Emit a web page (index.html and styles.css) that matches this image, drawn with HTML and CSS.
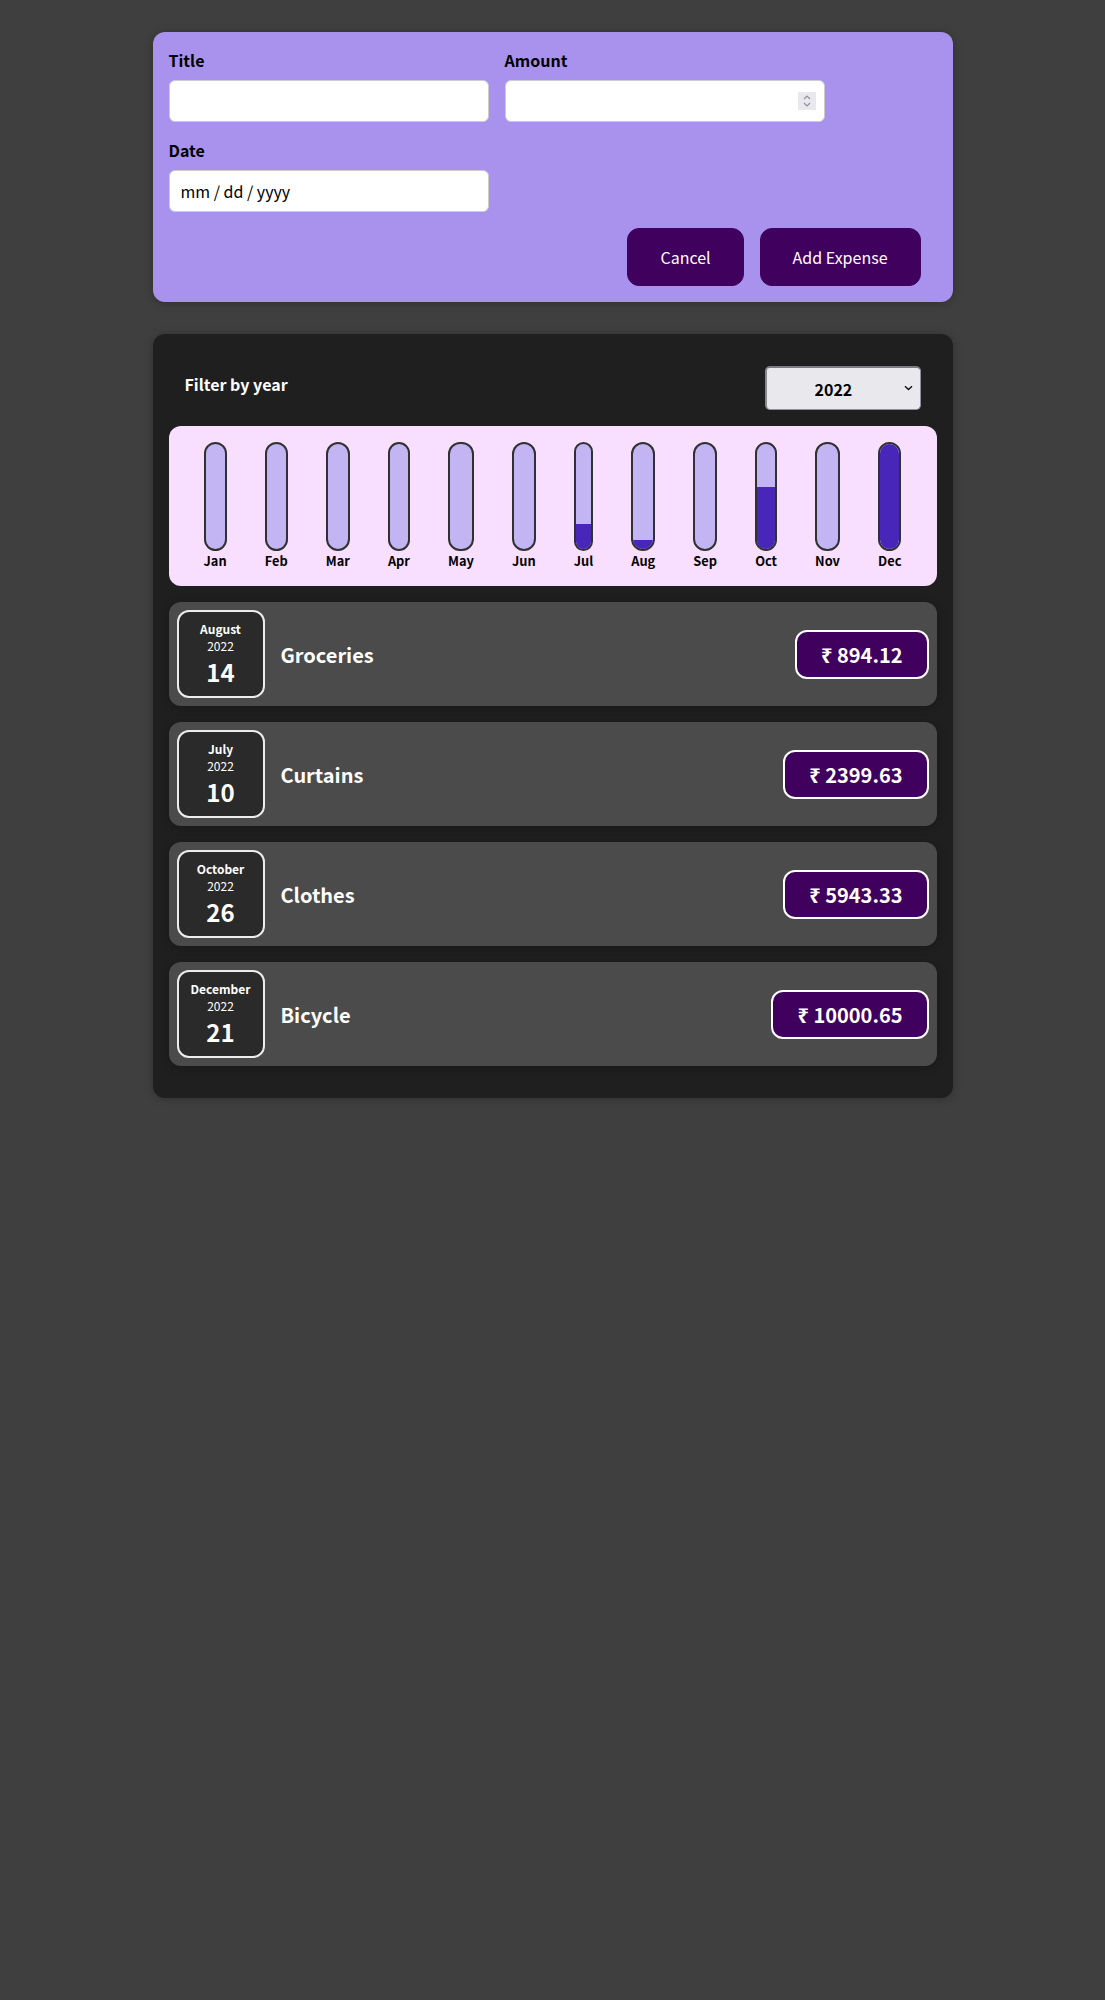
FILE: index.html
```html
<!DOCTYPE html>
<html lang="en">
<head>
<meta charset="utf-8">
<title>Expense Tracker</title>
<link rel="stylesheet" href="styles.css">
</head>
<body>
<div class="app">
  <div class="new-expense">
    <form class="expense-form">
      <div class="new-expense__controls">
        <div class="new-expense__control">
          <label>Title</label>
          <input type="text">
        </div>
        <div class="new-expense__control">
          <label>Amount</label>
          <span class="number-wrap">
            <input type="text" class="number-input">
            <span class="spinner">
              <svg width="10" height="14" viewBox="0 0 10 14"><path d="M2 5 L5 2 L8 5" fill="none" stroke="#8e8e9c" stroke-width="1.2"/><path d="M2 9 L5 12 L8 9" fill="none" stroke="#8e8e9c" stroke-width="1.2"/></svg>
            </span>
          </span>
        </div>
        <div class="new-expense__control">
          <label>Date</label>
          <input type="text" class="date-input" placeholder="mm / dd / yyyy">
        </div>
      </div>
      <div class="new-expense__actions">
        <button type="button" class="btn">Cancel</button>
        <button type="button" class="btn">Add Expense</button>
      </div>
    </form>
  </div>

  <div class="card expenses">
    <div class="expenses-filter">
      <div class="expenses-filter__control">
        <label>Filter by year</label>
        <span class="select-wrap">
          <select class="year-select">
            <option>2022</option>
            <option>2021</option>
            <option>2020</option>
            <option>2019</option>
          </select>
          <svg class="select-arrow" width="9" height="6" viewBox="0 0 9 6"><path d="M1 1.2 L4.5 4.6 L8 1.2" fill="none" stroke="#111" stroke-width="1.4"/></svg>
        </span>
      </div>
    </div>

    <div class="chart">
      <div class="chart-bar"><div class="chart-bar__inner"><div class="chart-bar__fill" style="height:0%"></div></div><div class="chart-bar__label">Jan</div></div>
      <div class="chart-bar"><div class="chart-bar__inner"><div class="chart-bar__fill" style="height:0%"></div></div><div class="chart-bar__label">Feb</div></div>
      <div class="chart-bar"><div class="chart-bar__inner"><div class="chart-bar__fill" style="height:0%"></div></div><div class="chart-bar__label">Mar</div></div>
      <div class="chart-bar"><div class="chart-bar__inner"><div class="chart-bar__fill" style="height:0%"></div></div><div class="chart-bar__label">Apr</div></div>
      <div class="chart-bar"><div class="chart-bar__inner"><div class="chart-bar__fill" style="height:0%"></div></div><div class="chart-bar__label">May</div></div>
      <div class="chart-bar"><div class="chart-bar__inner"><div class="chart-bar__fill" style="height:0%"></div></div><div class="chart-bar__label">Jun</div></div>
      <div class="chart-bar"><div class="chart-bar__inner"><div class="chart-bar__fill" style="height:24%"></div></div><div class="chart-bar__label">Jul</div></div>
      <div class="chart-bar"><div class="chart-bar__inner"><div class="chart-bar__fill" style="height:9%"></div></div><div class="chart-bar__label">Aug</div></div>
      <div class="chart-bar"><div class="chart-bar__inner"><div class="chart-bar__fill" style="height:0%"></div></div><div class="chart-bar__label">Sep</div></div>
      <div class="chart-bar"><div class="chart-bar__inner"><div class="chart-bar__fill" style="height:59%"></div></div><div class="chart-bar__label">Oct</div></div>
      <div class="chart-bar"><div class="chart-bar__inner"><div class="chart-bar__fill" style="height:0%"></div></div><div class="chart-bar__label">Nov</div></div>
      <div class="chart-bar"><div class="chart-bar__inner"><div class="chart-bar__fill" style="height:100%"></div></div><div class="chart-bar__label">Dec</div></div>
    </div>

    <div class="expenses-list">
      <div class="card expense-item">
        <div class="expense-date">
          <div class="expense-date__month">August</div>
          <div class="expense-date__year">2022</div>
          <div class="expense-date__day">14</div>
        </div>
        <div class="expense-item__description">
          <h2>Groceries</h2>
          <div class="expense-item__price">₹ 894.12</div>
        </div>
      </div>
      <div class="card expense-item">
        <div class="expense-date">
          <div class="expense-date__month">July</div>
          <div class="expense-date__year">2022</div>
          <div class="expense-date__day">10</div>
        </div>
        <div class="expense-item__description">
          <h2>Curtains</h2>
          <div class="expense-item__price">₹ 2399.63</div>
        </div>
      </div>
      <div class="card expense-item">
        <div class="expense-date">
          <div class="expense-date__month">October</div>
          <div class="expense-date__year">2022</div>
          <div class="expense-date__day">26</div>
        </div>
        <div class="expense-item__description">
          <h2>Clothes</h2>
          <div class="expense-item__price">₹ 5943.33</div>
        </div>
      </div>
      <div class="card expense-item">
        <div class="expense-date">
          <div class="expense-date__month">December</div>
          <div class="expense-date__year">2022</div>
          <div class="expense-date__day">21</div>
        </div>
        <div class="expense-item__description">
          <h2>Bicycle</h2>
          <div class="expense-item__price">₹ 10000.65</div>
        </div>
      </div>
    </div>
  </div>
</div>
</body>
</html>
```

FILE: styles.css
```css
* {
  box-sizing: border-box;
}

html {
  font-family: "Noto Sans CJK JP", "Noto Sans", "DejaVu Sans", sans-serif;
}

body {
  margin: 0;
  background-color: #3f3f3f;
}

/* ---------- New expense form ---------- */
.new-expense {
  background-color: #a892ee;
  padding: 1rem;
  margin: 2rem auto;
  width: 50rem;
  max-width: 95%;
  border-radius: 12px;
  text-align: center;
  box-shadow: 0 1px 8px rgba(0, 0, 0, 0.25);
}

.expense-form {
  margin: 0;
}

.new-expense__controls {
  display: flex;
  flex-wrap: wrap;
  gap: 1rem;
  margin-bottom: 1rem;
  text-align: left;
}

.new-expense__control label {
  font-weight: bold;
  margin-bottom: 0.5rem;
  display: block;
  color: #000;
}

.new-expense__control input {
  font: inherit;
  padding: 0.5rem;
  border-radius: 6px;
  border: 1px solid #ccc;
  width: 20rem;
  max-width: 100%;
  background: #fff;
  color: #000;
  outline: none;
}

.new-expense__control .date-input {
  padding-left: 11px;
}

.date-input::placeholder {
  color: #000;
  opacity: 1;
}

.number-wrap {
  position: relative;
  display: inline-block;
}

.spinner {
  position: absolute;
  right: 9px;
  top: 12px;
  width: 18px;
  height: 18px;
  background: #e9e9ed;
  display: flex;
  align-items: center;
  justify-content: center;
}

.spinner svg {
  display: block;
}

.new-expense__actions {
  display: flex;
  justify-content: flex-end;
  gap: 1rem;
}

.btn {
  font: inherit;
  cursor: pointer;
  padding: 1rem 2rem;
  border: 1px solid #40005d;
  background-color: #40005d;
  color: white;
  border-radius: 12px;
}

.btn:last-child {
  margin-right: 1rem;
}

/* ---------- Card ---------- */
.card {
  border-radius: 12px;
  box-shadow: 0 1px 8px rgba(0, 0, 0, 0.25);
}

.expenses {
  padding: 1rem;
  background-color: rgb(31, 31, 31);
  margin: 2rem auto;
  width: 50rem;
  max-width: 95%;
}

/* ---------- Filter ---------- */
.expenses-filter {
  color: white;
  padding: 0 1rem;
}

.expenses-filter__control {
  display: flex;
  width: 100%;
  align-items: center;
  justify-content: space-between;
  margin: 1rem 0;
}

.expenses-filter label {
  font-weight: bold;
  margin-bottom: 0.5rem;
}

.select-wrap {
  position: relative;
  display: inline-block;
}

.year-select {
  appearance: none;
  -webkit-appearance: none;
  font: inherit;
  font-weight: bold;
  color: #000;
  padding: 0 0 0 3rem;
  width: 156px;
  height: 44px;
  text-align: left;
  border-radius: 5px;
  border: 1px solid #8f8f9d;
  border-top: 2px solid #7c7c86;
  border-left: 2px solid #8a8a94;
  background-color: #e9e9ed;
  display: block;
}

.select-arrow {
  position: absolute;
  right: 8px;
  top: 19px;
  pointer-events: none;
}

/* ---------- Chart ---------- */
.chart {
  padding: 1rem;
  border-radius: 12px;
  background-color: #f8dfff;
  text-align: center;
  display: flex;
  justify-content: space-around;
  height: 10rem;
}

.chart-bar {
  height: 100%;
  display: flex;
  flex-direction: column;
  align-items: center;
}

.chart-bar__inner {
  height: 100%;
  width: 100%;
  border: 2px solid #313131;
  border-radius: 12px;
  background-color: #c3b4f3;
  overflow: hidden;
  display: flex;
  flex-direction: column;
  justify-content: flex-end;
}

.chart-bar__fill {
  background-color: #4826b9;
  width: 100%;
}

.chart-bar__label {
  font-weight: bold;
  font-size: 0.8rem;
  text-align: center;
  color: #000;
}

/* ---------- Expense items ---------- */
.expenses-list {
  margin: 0;
  padding: 0;
}

.expense-item {
  display: flex;
  justify-content: space-between;
  align-items: center;
  padding: 0.5rem;
  margin: 1rem 0;
  background-color: #4b4b4b;
}

.expense-item__description {
  display: flex;
  flex-direction: row;
  align-items: center;
  justify-content: flex-start;
  flex: 1;
}

.expense-item h2 {
  font-size: 1.25rem;
  flex: 1;
  margin: 0 1rem;
  color: white;
}

.expense-item__price {
  font-size: 1.25rem;
  font-weight: bold;
  color: white;
  background-color: #40005d;
  border: 2px solid white;
  padding: 0.5rem 1.5rem;
  border-radius: 12px;
}

.expense-date {
  display: flex;
  flex-direction: column;
  width: 5.5rem;
  height: 5.5rem;
  border: 2px solid #ececec;
  background-color: #2a2a2a;
  color: white;
  border-radius: 12px;
  align-items: center;
  justify-content: center;
  flex-shrink: 0;
}

.expense-date__month {
  font-size: 0.75rem;
  font-weight: bold;
}

.expense-date__year {
  font-size: 0.75rem;
}

.expense-date__day {
  font-size: 1.5rem;
  font-weight: bold;
}
```
